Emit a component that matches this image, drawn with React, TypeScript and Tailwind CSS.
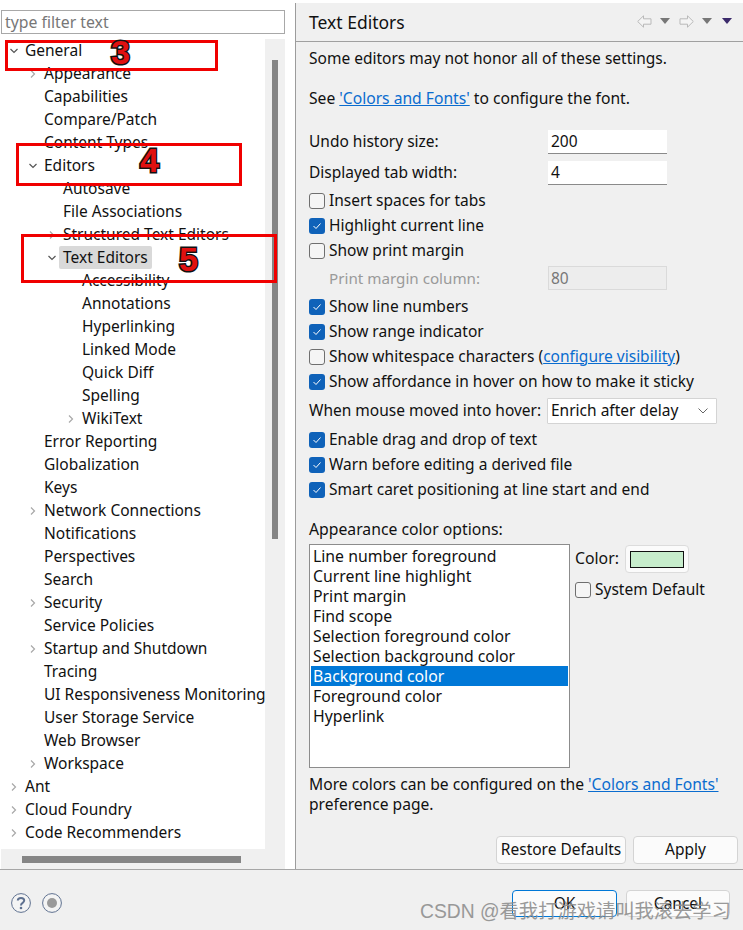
const font = '[font-family:"Noto_Sans","Open_Sans",sans-serif]';

const treeRows: [number, string, string?, boolean?][] = [
  [0, 'General', 'open'],
  [1, 'Appearance', 'closed'],
  [1, 'Capabilities'],
  [1, 'Compare/Patch'],
  [1, 'Content Types'],
  [1, 'Editors', 'open'],
  [2, 'Autosave'],
  [2, 'File Associations'],
  [2, 'Structured Text Editors', 'closed'],
  [2, 'Text Editors', 'open', true],
  [3, 'Accessibility'],
  [3, 'Annotations'],
  [3, 'Hyperlinking'],
  [3, 'Linked Mode'],
  [3, 'Quick Diff'],
  [3, 'Spelling'],
  [3, 'WikiText', 'closed'],
  [1, 'Error Reporting'],
  [1, 'Globalization'],
  [1, 'Keys'],
  [1, 'Network Connections', 'closed'],
  [1, 'Notifications'],
  [1, 'Perspectives'],
  [1, 'Search'],
  [1, 'Security', 'closed'],
  [1, 'Service Policies'],
  [1, 'Startup and Shutdown', 'closed'],
  [1, 'Tracing'],
  [1, 'UI Responsiveness Monitoring'],
  [1, 'User Storage Service'],
  [1, 'Web Browser'],
  [1, 'Workspace', 'closed'],
  [0, 'Ant', 'closed'],
  [0, 'Cloud Foundry', 'closed'],
  [0, 'Code Recommenders', 'closed'],
];

const colorOptions = [
  'Line number foreground',
  'Current line highlight',
  'Print margin',
  'Find scope',
  'Selection foreground color',
  'Selection background color',
  'Background color',
  'Foreground color',
  'Hyperlink',
];

const Twisty = ({ state }: { state?: string }) => {
  if (state === 'open') {
    return (
      <svg width="8" height="6" viewBox="0 0 8 6" className="shrink-0">
        <path d="M0.5 1 L4 4.5 L7.5 1" fill="none" stroke="#555" strokeWidth="1.2" />
      </svg>
    );
  }
  if (state === 'closed') {
    return (
      <svg width="8" height="8" viewBox="0 0 8 8" className="shrink-0">
        <path d="M2 0.5 L5.5 4 L2 7.5" fill="none" stroke="#a8a8a8" strokeWidth="1.2" />
      </svg>
    );
  }
  return <span className="w-2 shrink-0" />;
};

const TreeRow = ({ level, label, state, selected }: { level: number; label: string; state?: string; selected?: boolean }) => {
  const pad = ['pl-[9px]', 'pl-[28px]', 'pl-[47px]', 'pl-[66px]'][level];
  return (
    <div className={`flex h-[23px] items-center whitespace-nowrap ${pad}`}>
      <Twisty state={state} />
      <span className={`ml-[3px] px-[4px] h-[23px] leading-[22px] rounded-[2px] ${selected ? 'bg-[#d9d9d9]' : ''}`}>{label}</span>
    </div>
  );
};

const Check = ({ label, checked, children }: { label?: string; checked?: boolean; children?: React.ReactNode }) => (
  <div className="flex h-[25px] items-center whitespace-nowrap">
    {checked ? (
      <span className="w-4 h-4 rounded-[3px] bg-[#0f62b9] flex items-center justify-center shrink-0">
        <svg width="10" height="8" viewBox="0 0 10 8">
          <path d="M1.5 4 L4 6.5 L8.5 1.5" fill="none" stroke="#fff" strokeWidth="1" />
        </svg>
      </span>
    ) : (
      <span className="w-4 h-4 rounded-[3px] border border-[#6f6f6f] bg-[#f5f5f5] shrink-0" />
    )}
    <span className="ml-1">
      {label}
      {children}
    </span>
  </div>
);

const Btn = ({ label, className }: { label: string; className: string }) => (
  <div className={`h-[28px] flex items-center justify-center bg-[#fbfbfb] border border-[#d4d4d4] rounded-[4px] ${className}`}>{label}</div>
);

const Link = ({ children }: { children: React.ReactNode }) => <span className="text-[#0a6ccf] underline">{children}</span>;

const NavArrow = ({ flip }: { flip?: boolean }) => (
  <svg width="15" height="13" viewBox="0 0 15 13" className={flip ? '-scale-x-100' : ''}>
    <path d="M0.7 6.5 L6.5 0.8 V3.8 H14 V9.2 H6.5 V12.2 Z" fill="#f4f4f4" stroke="#b9b9b9" strokeWidth="1" />
  </svg>
);

const Caret = ({ color }: { color: string }) => (
  <svg width="10" height="6" viewBox="0 0 10 6">
    <path d="M0 0 H10 L5 6 Z" fill={color} />
  </svg>
);

const Box = ({ className }: { className: string }) => <div className={`absolute border-[3px] border-[#f00000] ${className}`} />;

const Mark = ({ n, className }: { n: string; className: string }) => (
  <div className={`absolute text-[34px] leading-none font-bold text-[#e01010] [font-family:"Liberation_Sans",sans-serif] [-webkit-text-stroke:3px_#111] [paint-order:stroke_fill] ${className}`}>{n}</div>
);

export default function App() {
  return (
    <div className={`relative w-[743px] h-[930px] overflow-hidden bg-white text-[#111] text-[15.5px] ${font}`}>
      <div className="flex h-[869px]">
        <div className="w-[295px] flex flex-col pt-[10px]">
          <div className="ml-[1px] w-[284px] h-[24px] border border-[#a8a8a8] px-[3px] leading-[22px] text-[15.8px] text-[#777]">type filter text</div>
          <div className="mt-[5px] ml-[1px] w-[284px] flex flex-col flex-1 min-h-0 bg-[#f0f0f0]">
            <div className="flex flex-1 min-h-0">
              <div className="w-[264px] bg-white overflow-hidden">
                {treeRows.map(([level, label, state, selected]) => (
                  <TreeRow key={label} level={level} label={label} state={state} selected={selected} />
                ))}
              </div>
              <div className="flex-1 pt-[21px] pl-[7px]">
                <div className="w-[6px] h-[479px] bg-[#858585]" />
              </div>
            </div>
            <div className="h-[20px] pt-[7px] pl-[21px]">
              <div className="w-[219px] h-[7px] bg-[#858585]" />
            </div>
          </div>
        </div>
        <div className="w-[448px] mt-[3px] border-l border-[#9c9c9c] bg-[#f0f0f0] flex flex-col">
          <div className="h-[39px] flex items-center pl-[13px] pr-[11px] border-b border-[#a0a0a0]">
            <span className="text-[17.5px] flex-1 mt-[1px]">Text Editors</span>
            <div className="flex items-center mt-[-2px]">
              <NavArrow />
              <span className="ml-[8px]"><Caret color="#777" /></span>
              <span className="ml-[9px]"><NavArrow flip /></span>
              <span className="ml-[8px]"><Caret color="#777" /></span>
              <span className="ml-[10px]"><Caret color="#3b2a6b" /></span>
            </div>
          </div>
          <div className="flex-1 pl-[13px] flex flex-col">
            <div className="h-[20px] mt-[6px] leading-[20px]">Some editors may not honor all of these settings.</div>
            <div className="h-[20px] mt-[20px] leading-[20px] text-[15.65px]">See <Link>'Colors and Fonts'</Link> to configure the font.</div>
            <div className="flex items-center h-[24px] mt-[22px]">
              <span className="w-[239px]">Undo history size:</span>
              <div className="w-[119px] h-[24px] bg-white border-b border-[#8a8a8a] px-[3px] leading-[23px]">200</div>
            </div>
            <div className="flex items-center h-[24px] mt-[7px]">
              <span className="w-[239px]">Displayed tab width:</span>
              <div className="w-[119px] h-[24px] bg-white border-b border-[#8a8a8a] px-[3px] leading-[23px]">4</div>
            </div>
            <div className="mt-[3px]">
              <Check label="Insert spaces for tabs" />
              <Check label="Highlight current line" checked />
              <Check label="Show print margin" />
            </div>
            <div className="flex items-center h-[24px] mt-[3px] text-[#9a9a9a]">
              <span className="w-[239px] pl-[20px] text-[15.2px]">Print margin column:</span>
              <div className="w-[119px] h-[24px] bg-[#ededed] border border-[#dadada] px-[2px] leading-[22px] text-[#777]">80</div>
            </div>
            <div className="mt-[4px]">
              <Check label="Show line numbers" checked />
              <Check label="Show range indicator" checked />
              <Check label="Show whitespace characters (">
                <Link>configure visibility</Link>)
              </Check>
              <Check label="Show affordance in hover on how to make it sticky" checked />
            </div>
            <div className="flex items-center h-[26px] mt-[4px]">
              <span className="w-[238px] whitespace-nowrap">When mouse moved into hover:</span>
              <div className="w-[170px] h-[26px] bg-white border border-[#d4d4d4] flex items-center px-[3px] rounded-[1px]">
                <span className="flex-1">Enrich after delay</span>
                <svg width="10" height="6" viewBox="0 0 10 6" className="mr-[5px]">
                  <path d="M0.5 0.5 L5 5 L9.5 0.5" fill="none" stroke="#666" strokeWidth="1" />
                </svg>
              </div>
            </div>
            <div className="mt-[3px]">
              <Check label="Enable drag and drop of text" checked />
              <Check label="Warn before editing a derived file" checked />
              <Check label="Smart caret positioning at line start and end" checked />
            </div>
            <div className="h-[20px] mt-[17px] leading-[20px] text-[15.75px]">Appearance color options:</div>
            <div className="flex mt-[5px]">
              <div className="w-[261px] h-[224px] bg-white border border-[#8c8c8c] p-[1px] text-[15.8px]">
                {colorOptions.map((item) => (
                  <div key={item} className={`h-[20px] leading-[20px] px-[2px] ${item === 'Background color' ? 'bg-[#0078d7] text-white' : ''}`}>{item}</div>
                ))}
              </div>
              <div className="ml-[5px] flex flex-col">
                <div className="flex items-center h-[28px] mt-[1px]">
                  <span className="text-[15.8px]">Color:</span>
                  <div className="ml-[6px] w-[64px] h-[28px] bg-[#fbfbfb] border border-[#dcdcdc] rounded-[4px] flex items-center justify-center">
                    <div className="w-[54px] h-[17px] bg-[#c7edcc] border border-[#111]" />
                  </div>
                </div>
                <div className="mt-[4px]">
                  <Check label="System Default" />
                </div>
              </div>
            </div>
            <div className="h-[20px] mt-[6px] leading-[20px] whitespace-nowrap text-[15.65px]">More colors can be configured on the <Link>'Colors and Fonts'</Link></div>
            <div className="h-[20px] leading-[20px] text-[15.6px]">preference page.</div>
            <div className="flex mt-[22px] pl-[187px] gap-[7px]">
              <Btn label="Restore Defaults" className="w-[130px]" />
              <Btn label="Apply" className="w-[105px]" />
            </div>
          </div>
        </div>
      </div>
      <div className="h-[61px] bg-[#f0f0f0] border-t border-[#a6a6a6] flex items-start">
        <div className="flex mt-[23px] ml-[11px] gap-[11px]">
          <svg width="20" height="20" viewBox="0 0 20 20">
            <circle cx="10" cy="10" r="9.4" fill="#f4f4f4" stroke="#5f7190" strokeWidth="1" />
            <path d="M6.8 7.6 C6.8 4 13.2 4 13.2 7.6 C13.2 10 10 9.8 10 12.4" fill="none" stroke="#5f7190" strokeWidth="2" />
            <circle cx="10" cy="15" r="1.3" fill="#5f7190" />
          </svg>
          <svg width="20" height="20" viewBox="0 0 20 20">
            <circle cx="10" cy="10" r="9.4" fill="#f4f4f4" stroke="#5f7190" strokeWidth="1" />
            <circle cx="10" cy="10" r="5" fill="#9a9a9a" />
          </svg>
        </div>
        <div className="ml-auto mr-[13px] mt-[20px] flex gap-[9px]">
          <Btn label="OK" className="w-[105px] !border-[#0078d7] !h-[27px]" />
          <Btn label="Cancel" className="w-[104px] !h-[27px]" />
        </div>
      </div>
      <Box className="left-[5px] top-[40px] w-[213px] h-[31px]" />
      <Box className="left-[16px] top-[143px] w-[226px] h-[43px]" />
      <Box className="left-[21px] top-[234px] w-[256px] h-[49px]" />
      <Mark n="3" className="left-[111px] top-[35px]" />
      <Mark n="4" className="left-[140px] top-[143px]" />
      <Mark n="5" className="left-[179px] top-[242px]" />
      <div className='absolute left-[420px] top-[899px] text-[19.3px] leading-[26px] whitespace-nowrap text-[#8f8f8f] opacity-90 [font-family:"Liberation_Sans","Noto_Sans_CJK_SC",sans-serif]'>CSDN @看我打游戏请叫我滚去学习</div>
    </div>
  );
}
